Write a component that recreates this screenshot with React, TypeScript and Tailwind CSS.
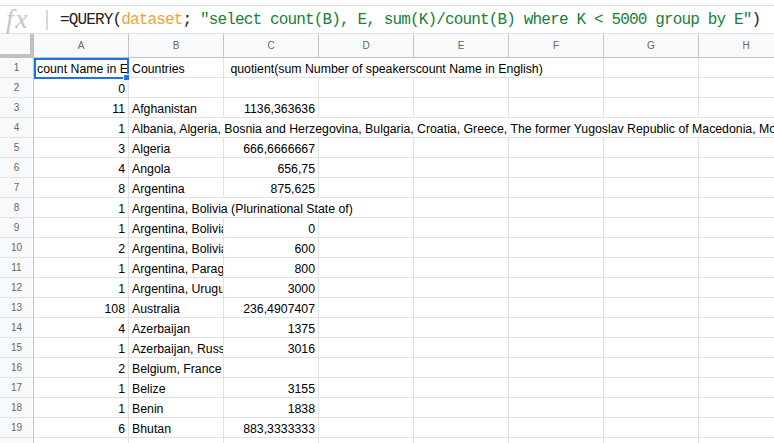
import React from "react";

type Cell = { text?: string; right?: boolean; span?: number };

const columns = ["A", "B", "C", "D", "E", "F", "G", "H"];

const spanWidth: Record<number, string> = {
  1: "w-[95px]",
  2: "w-[190px]",
  3: "w-[285px]",
  4: "w-[380px]",
  7: "w-[665px]",
};

const rows: Cell[][] = [
  [
    { text: "count Name in English" },
    { text: "Countries" },
    { text: " quotient(sum Number of speakerscount Name in English)", span: 4 },
    {},
    {},
  ],
  [{ text: "0", right: true }, {}, {}, {}, {}, {}, {}, {}],
  [{ text: "11", right: true }, { text: "Afghanistan" }, { text: "1136,363636", right: true }, {}, {}, {}, {}, {}],
  [
    { text: "1", right: true },
    {
      text: "Albania, Algeria, Bosnia and Herzegovina, Bulgaria, Croatia, Greece, The former Yugoslav Republic of Macedonia, Montenegro, Romania, Serbia, Turkey",
      span: 7,
    },
  ],
  [{ text: "3", right: true }, { text: "Algeria" }, { text: "666,6666667", right: true }, {}, {}, {}, {}, {}],
  [{ text: "4", right: true }, { text: "Angola" }, { text: "656,75", right: true }, {}, {}, {}, {}, {}],
  [{ text: "8", right: true }, { text: "Argentina" }, { text: "875,625", right: true }, {}, {}, {}, {}, {}],
  [{ text: "1", right: true }, { text: "Argentina, Bolivia (Plurinational State of)", span: 3 }, {}, {}, {}, {}],
  [{ text: "1", right: true }, { text: "Argentina, Bolivia (Plurinational State of), Chile" }, { text: "0", right: true }, {}, {}, {}, {}, {}],
  [{ text: "2", right: true }, { text: "Argentina, Bolivia (Plurinational State of), Paraguay" }, { text: "600", right: true }, {}, {}, {}, {}, {}],
  [{ text: "1", right: true }, { text: "Argentina, Paraguay" }, { text: "800", right: true }, {}, {}, {}, {}, {}],
  [{ text: "1", right: true }, { text: "Argentina, Uruguay" }, { text: "3000", right: true }, {}, {}, {}, {}, {}],
  [{ text: "108", right: true }, { text: "Australia" }, { text: "236,4907407", right: true }, {}, {}, {}, {}, {}],
  [{ text: "4", right: true }, { text: "Azerbaijan" }, { text: "1375", right: true }, {}, {}, {}, {}, {}],
  [{ text: "1", right: true }, { text: "Azerbaijan, Russian Federation" }, { text: "3016", right: true }, {}, {}, {}, {}, {}],
  [{ text: "2", right: true }, { text: "Belgium, France" }, {}, {}, {}, {}, {}, {}],
  [{ text: "1", right: true }, { text: "Belize" }, { text: "3155", right: true }, {}, {}, {}, {}, {}],
  [{ text: "1", right: true }, { text: "Benin" }, { text: "1838", right: true }, {}, {}, {}, {}, {}],
  [{ text: "6", right: true }, { text: "Bhutan" }, { text: "883,3333333", right: true }, {}, {}, {}, {}, {}],
  [{}, {}, {}, {}, {}, {}, {}, {}],
];

function FormulaBar() {
  return (
    <div className="pt-[5px]">
      <div className="flex h-[29px] items-center border-y border-[#e1e1e1]">
        <span className="w-[46px] shrink-0 pl-[6px] font-['Liberation_Serif',serif] text-[27px] italic leading-none tracking-[2px] text-[#c6c6c6]">
          fx
        </span>
        <span className="h-[20px] w-[2px] shrink-0 bg-[#d6d6d6]" />
        <span className="ml-[12px] whitespace-pre font-['Liberation_Mono',monospace] text-[16px] tracking-[-0.85px] text-[#222]">
          =QUERY(<span className="text-[#f0a13c]">dataset</span>;{" "}
          <span className="text-[#188038]">"select count(B), E, sum(K)/count(B) where K &lt; 5000 group by E"</span>)
        </span>
      </div>
    </div>
  );
}

function HeaderRow() {
  return (
    <div className="flex h-[24px] border-b border-[#c4c4c4] bg-[#f8f9fa]">
      <div className="-mb-px h-[24px] w-[34px] shrink-0 border-r-[4px] border-b-[4px] border-[#c0c0c0] bg-[#f8f9fa]" />
      {columns.map((c) => (
        <div
          key={c}
          className="flex w-[95px] shrink-0 items-center justify-center border-r border-[#c4c4c4] text-[10px] text-[#666]"
        >
          {c}
        </div>
      ))}
    </div>
  );
}

export default function App() {
  return (
    <div className="relative h-[443px] w-[774px] overflow-hidden bg-white font-['Liberation_Sans',Arial,sans-serif]">
      <FormulaBar />
      <HeaderRow />
      <div className="relative">
        {rows.map((cells, i) => (
          <div key={i} className="flex h-[20px]">
            <div className="flex w-[34px] shrink-0 items-center justify-center border-r border-b border-r-[#c4c4c4] border-b-[#e2e2e2] bg-[#f8f9fa] text-[10px] text-[#666]">
              {i + 1}
            </div>
            {cells.map((cell, j) => (
              <div
                key={j}
                className={`${spanWidth[cell.span ?? 1]} shrink-0 overflow-hidden whitespace-pre border-r border-b border-[#e2e2e2] px-[3px] text-[12.3px] leading-[23px] text-black ${
                  cell.right ? "text-right" : "text-left"
                }`}
              >
                {cell.text ?? ""}
              </div>
            ))}
          </div>
        ))}
        {/* selection on A1 */}
        <div className="absolute left-[34px] top-0 h-[21px] w-[95px] border-2 border-[#1a73e8]" />
        <div className="absolute left-[123px] top-[16px] h-[7px] w-[7px] border border-white bg-[#1a73e8]" />
      </div>
    </div>
  );
}
